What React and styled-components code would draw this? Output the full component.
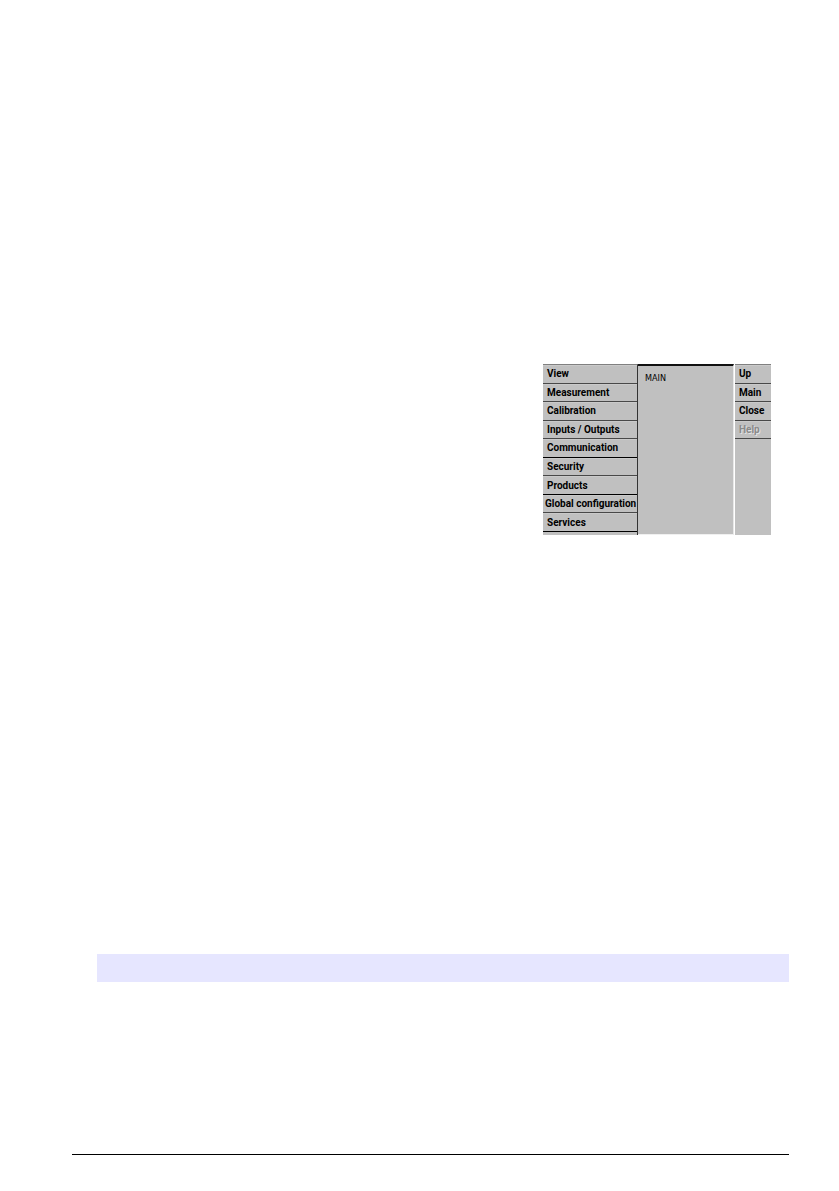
import React from "react";
import styled, { createGlobalStyle } from "styled-components";

const GlobalStyle = createGlobalStyle`
  body {
    margin: 0;
    background: #fff;
  }
`;

const menuItems = [
  "View",
  "Measurement",
  "Calibration",
  "Inputs / Outputs",
  "Communication",
  "Security",
  "Products",
  "Global configuration",
  "Services",
];

const actionItems = [
  { label: "Up" },
  { label: "Main" },
  { label: "Close" },
  { label: "Help", disabled: true },
];

// rows that end in the darker line
const darkRows = ["Communication", "Products", "Services"];

const Page = styled.div`
  box-sizing: border-box;
  min-height: 100vh;
  padding: 364px 50px 36px 72px;
  display: flex;
  flex-direction: column;
`;

const Screen = styled.main`
  align-self: flex-end;
  display: grid;
  grid-template-columns: 95px 97px 36px;
  height: 171px;
  margin-right: 18px;
  font-family: Roboto, "Liberation Sans", sans-serif;
`;

const Column = styled.div`
  box-sizing: border-box;
  display: grid;
  grid-template-rows: repeat(9, 1fr);
  padding-bottom: 3px;
  background: #c0c0c0;
  border-top: 1px solid #808080;
`;

const Menu = styled(Column)`
  border-right: 1px solid #333;
`;

const Content = styled.section`
  margin-right: 1px;
  padding: 6px 7px;
  background: #c0c0c0;
  border-top: 2px solid #111;
  border-right: 1px solid #e8e8e8;
  border-bottom: 1px solid #f0f0f0;
`;

const Title = styled.h1`
  margin: 0;
  font: 400 9px/12px "DejaVu Sans Condensed", "DejaVu Sans", sans-serif;
  color: #000;
`;

const MenuButton = styled.button`
  box-sizing: border-box;
  min-width: 0;
  min-height: 0;
  padding: 0 0 0 ${({ $wide }) => ($wide ? "2px" : "4px")};
  border: 0;
  border-top: 1px solid #cacaca;
  border-bottom: 1px solid ${({ $dark }) => ($dark ? "#000" : "#484848")};
  background: #c0c0c0;
  font-family: inherit;
  font-size: 10px;
  font-weight: 700;
  line-height: 12px;
  text-align: left;
  white-space: nowrap;
  color: #000;

  &:disabled {
    color: #8a8a8a;
    text-shadow: 1px 1px 0 #e4e4e4;
  }
`;

const Note = styled.aside`
  height: 28px;
  margin-top: 419px;
  margin-left: 25px;
  background: #e6e6ff;
`;

const FooterRule = styled.hr`
  width: 100%;
  margin: auto 0 0;
  border: 0;
  border-top: 1px solid #000;
`;

const App = () => {
  return (
    <>
      <GlobalStyle />
      <Page>
        <Screen>
          <Menu as="nav">
            {menuItems.map((item) => (
              <MenuButton
                key={item}
                type="button"
                $dark={darkRows.includes(item)}
                $wide={item.length > 16}
              >
                {item}
              </MenuButton>
            ))}
          </Menu>
          <Content>
            <Title>MAIN</Title>
          </Content>
          <Column>
            {actionItems.map((item) => (
              <MenuButton key={item.label} type="button" disabled={item.disabled}>
                {item.label}
              </MenuButton>
            ))}
          </Column>
        </Screen>
        <Note />
        <FooterRule />
      </Page>
    </>
  );
};

export default App;
